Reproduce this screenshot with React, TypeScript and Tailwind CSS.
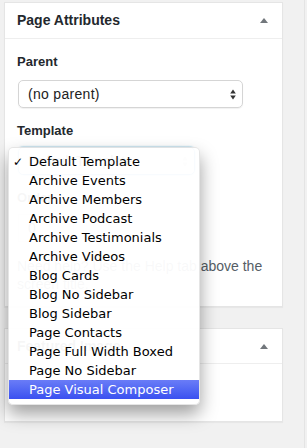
const TEMPLATES = [
  'Default Template',
  'Archive Events',
  'Archive Members',
  'Archive Podcast',
  'Archive Testimonials',
  'Archive Videos',
  'Blog Cards',
  'Blog No Sidebar',
  'Blog Sidebar',
  'Page Contacts',
  'Page Full Width Boxed',
  'Page No Sidebar',
  'Page Visual Composer',
];

function Toggle() {
  return (
    <span className="w-0 h-0 border-l-[4px] border-r-[4px] border-b-[5px] border-l-transparent border-r-transparent border-b-[#72777c]" />
  );
}

function Arrows({ faint }: { faint?: boolean }) {
  return (
    <svg width="6" height="11" viewBox="0 0 6 11" className={faint ? 'opacity-30' : ''}>
      <path d="M3 0.5 L5.8 4.5 H0.2 Z" fill="#333" />
      <path d="M3 10.5 L5.8 6.5 H0.2 Z" fill="#333" />
    </svg>
  );
}

function PanelHeader({ title, h }: { title: string; h: string }) {
  return (
    <div className={`${h} flex items-center justify-between pl-3 pr-[14px] border-b border-[#eeeeee]`}>
      <span className="text-[14px] font-bold text-[#23282d]">{title}</span>
      <Toggle />
    </div>
  );
}

export default function App() {
  return (
    <div className="relative w-[307px] h-[448px] overflow-hidden bg-[#f1f1f1] font-['Liberation_Sans',Arial,sans-serif]">
      <div className="flex h-full">
        <div className="w-[304px] pl-1 pt-[2px]">
          <div className="w-[279px] bg-white border border-[#e5e5e5] shadow-[0_1px_1px_rgba(0,0,0,0.04)]">
            <PanelHeader title="Page Attributes" h="h-[36px]" />
            <div className="px-3 pt-[13px] pb-[13px]">
              <p className="text-[13px] font-bold leading-[20px] text-[#23282d]">Parent</p>
              <div className="mt-2 ml-px w-[225px] h-[28px] flex items-center justify-between pl-[9px] pr-[6px] border border-[#d5d5d5] rounded-[5px] shadow-[0_1px_1px_rgba(0,0,0,0.06)]">
                <span className="text-[14px] text-[#222] tracking-[0.3px]">(no parent)</span>
                <Arrows />
              </div>
              <p className="mt-[13px] text-[13px] font-bold leading-[20px] text-[#23282d]">Template</p>
              <div className="mt-[6px] ml-px w-[177px] h-[28px] flex items-center justify-between pl-[9px] pr-[6px] border border-[#5b9dd9] rounded-[5px] shadow-[0_0_2px_rgba(30,140,190,0.8)]">
                <span className="text-[14px] text-[#222]">Default Template</span>
                <Arrows faint />
              </div>
              <p className="mt-[13px] text-[13px] font-bold leading-[20px] text-[#23282d]">Order</p>
              <div className="mt-[6px] ml-px w-[56px] h-[28px] flex items-center pl-[9px] border border-[#ddd] shadow-[inset_0_1px_2px_rgba(0,0,0,0.07)]">
                <span className="text-[14px] text-[#222]">0</span>
              </div>
              <p className="mt-[15px] text-[14px] leading-[18px] text-[#555d66]">
                Need help? Use the Help tab above the screen title.
              </p>
            </div>
          </div>

          <div className="mt-[21px] w-[279px] bg-white border border-[#e5e5e5] shadow-[0_1px_1px_rgba(0,0,0,0.04)]">
            <PanelHeader title="Featured Image" h="h-[35px]" />
            <div className="h-[57px]" />
          </div>
        </div>
        <div className="w-px bg-[#e4e4e4]" />
      </div>

      {/* native select popup */}
      <div className="absolute left-[8px] top-[147px] w-[192px] pt-[4px] pb-[5px] rounded-[5px] bg-white/[0.96] border border-black/10 shadow-[0_9px_18px_rgba(0,0,0,0.38)] font-['DejaVu_Sans',Verdana,sans-serif] text-[13px]">
        {TEMPLATES.map((t, i) => {
          const hot = i === TEMPLATES.length - 1;
          return (
            <div
              key={t}
              className={`h-[19px] flex items-center ${hot ? 'bg-gradient-to-b from-[#6a7cf7] to-[#3b50f0] text-white' : 'text-black'}`}
            >
              <span className="w-[20px] pl-[4px] text-[12px]">{i === 0 ? '✓' : ''}</span>
              <span className="whitespace-nowrap">{t}</span>
            </div>
          );
        })}
      </div>
    </div>
  );
}
